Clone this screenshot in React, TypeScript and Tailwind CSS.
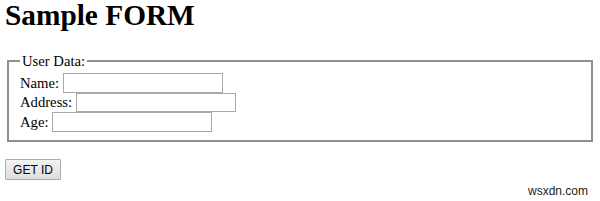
import React from "react";

export default function App() {
  return (
    <div className="relative h-[201px] w-[600px] overflow-hidden bg-white px-[5px] text-black [font-family:'Liberation_Serif','Times_New_Roman',serif]">
      <h1 className="m-0 text-[29.33px] font-bold leading-[30px] mb-[22.5px]">Sample FORM</h1>
      <fieldset className="mx-[2px] border-2 border-[#8f8f8f] px-[11px] pt-[3.5px] pb-[8px] text-[14.67px]">
        <legend className="px-[2px] leading-[17px]">User Data:</legend>
        <div className="flex h-[19.5px] items-center">
          <span className="mr-[3.7px]">Name:</span>
          <input type="text" className="h-[19.5px] w-[160px] border border-[#a9a9a9] bg-white outline-none" />
        </div>
        <div className="flex h-[19.5px] items-center">
          <span className="mr-[3.7px]">Address:</span>
          <input type="text" className="h-[19.5px] w-[160px] border border-[#a9a9a9] bg-white outline-none" />
        </div>
        <div className="flex h-[19.5px] items-center">
          <span className="mr-[3.7px]">Age:</span>
          <input type="text" className="h-[19.5px] w-[160px] border border-[#a9a9a9] bg-white outline-none" />
        </div>
      </fieldset>
      <button
        type="button"
        className="mt-[17.5px] flex h-[21px] w-[56px] items-center justify-center rounded-[1px] border border-[#acacac] bg-gradient-to-b from-[#f3f3f3] to-[#dedede] text-[12px] text-black [font-family:'Liberation_Sans',Arial,sans-serif]"
      >
        GET ID
      </button>
      <div className="absolute right-[12px] top-[184px] text-[12px] leading-[14px] text-[#222] [font-family:'Liberation_Sans',Arial,sans-serif]">
        wsxdn.com
      </div>
    </div>
  );
}
